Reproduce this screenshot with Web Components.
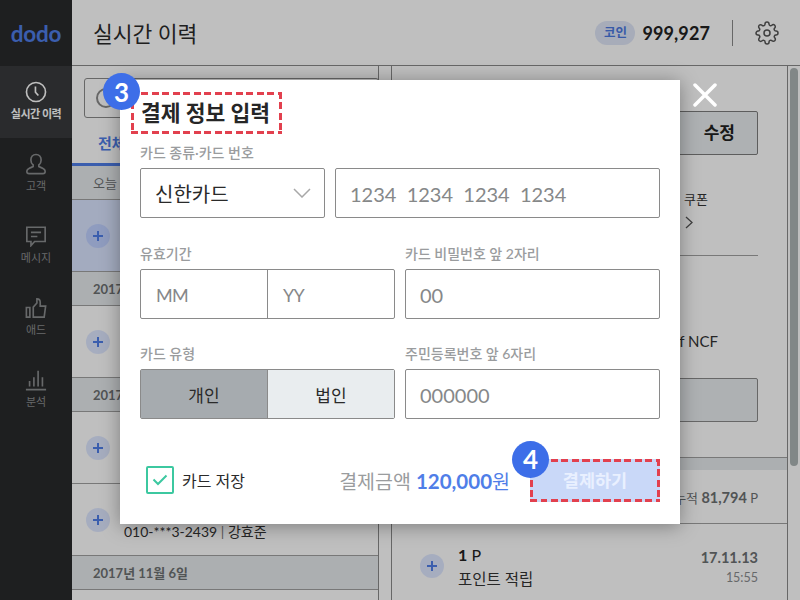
<!DOCTYPE html>
<html lang="ko">
<head>
<meta charset="utf-8">
<title>dodo</title>
<style>
  html, body { margin: 0; height: 100%; overflow: hidden; }
  body { font-family: Lato, "Noto Sans CJK KR", sans-serif; color: #2a2a2a; }
  dodo-app { width: 800px; height: 600px; }
</style>
</head>
<body>

<dodo-app>
  <nav-rail slot="rail">
    <nav-item label="실시간 이력" icon="clock" active></nav-item>
    <nav-item label="고객" icon="person"></nav-item>
    <nav-item label="메시지" icon="message"></nav-item>
    <nav-item label="애드" icon="thumb"></nav-item>
    <nav-item label="분석" icon="chart"></nav-item>
  </nav-rail>
  <top-bar slot="top" heading="실시간 이력" coin="999,927"></top-bar>
  <history-list slot="list">
    <date-row light>오늘</date-row>
    <history-row active></history-row>
    <date-row>2017</date-row>
    <history-row></history-row>
    <date-row>2017</date-row>
    <history-row></history-row>
    <history-row>010-***3-2439 <i>|</i> 강효준</history-row>
    <date-row>2017년 11월 6일</date-row>
  </history-list>
  <detail-panel slot="detail"></detail-panel>
  <pay-modal slot="modal"></pay-modal>
</dodo-app>

<script>
const FONT = `Lato, "Noto Sans CJK KR", sans-serif`

// red dashed frame drawn as four gradients, css "dashed" is too short here
const RED = "#e2404e"
const dashH = `repeating-linear-gradient(90deg, ${RED} 0 7px, transparent 7px 10.5px)`
const dashV = `repeating-linear-gradient(180deg, ${RED} 0 7px, transparent 7px 10.5px)`
const FRAME = `${dashH} left top / 100% 3px no-repeat, ${dashH} left bottom / 100% 3px no-repeat, ${dashV} left top / 3px 100% no-repeat, ${dashV} right top / 3px 100% no-repeat`

const ICONS = {
    clock: `<circle cx="12" cy="12" r="10.4"/><path d="M11.4 6v6.2l3.2 3.6"/>`,
    person: `<path d="M12 1.6c-3.5 0-5.6 2.6-5.6 6 0 2.400 1 4.300 2.500 5.500v1.700c-2.300.9-6.900 2.200-6.900 5.300 0 1.500 1 2.400 2.400 2.400h15.200c1.400 0 2.400-.9 2.400-2.400 0-3.100-4.600-4.400-6.900-5.300v-1.700c1.500-1.200 2.500-3.100 2.500-5.500 0-3.400-2.100-6-5.600-6z"/>`,
    message: `<path d="M2 2.500h20v15.500H10.500l-4 4.500v-4.500H2z"/><path d="M6.500 8h11M6.500 12.500h7"/>`,
    thumb: `<path d="M1.500 11.500h3.800v10.500H1.500zM9 22V11l4-4.500V2c2.400 0 3.600 1.600 3.600 3.800V10h5.900l-1.600 12z"/>`,
    chart: `<path d="M1 22.500h22M5 19v-6M9.700 19V9M14.300 19V2M19 19V9"/>`
}

class DodoApp extends HTMLElement {
    connectedCallback() {
        this.attachShadow({ mode: "open" })
        this.shadowRoot.innerHTML = `
      <style>
        :host { display: flex; position: relative; background: #fff; overflow: hidden; }
        .main { flex: 1; display: flex; flex-direction: column; min-width: 0; }
        .body { flex: 1; display: flex; min-height: 0; }
        .gutter { width: 14px; border-left: 1px solid #8a8a8a; border-right: 1px solid #8a8a8a; box-sizing: border-box; background: #fff; }
        .track { width: 13px; border-left: 1px solid #8a8a8a; box-sizing: border-box; padding: 2px 2px 0 2px; }
        .thumb { height: 398px; background: #adb5b5; border-radius: 4px; }
        .veil { position: absolute; inset: 0; background: rgba(0,0,0,.25); display: flex; justify-content: center; align-items: flex-start; padding-top: 80px; box-sizing: border-box; }
      </style>
      <slot name="rail"></slot>
      <div class="main">
        <slot name="top"></slot>
        <div class="body">
          <slot name="list"></slot>
          <div class="gutter"></div>
          <slot name="detail"></slot>
          <div class="track"><div class="thumb"></div></div>
        </div>
      </div>
      <div class="veil"><slot name="modal"></slot></div>
    `
    }
}

class NavRail extends HTMLElement {
    connectedCallback() {
        this.attachShadow({ mode: "open" })
        this.shadowRoot.innerHTML = `
      <style>
        :host { display: flex; flex-direction: column; width: 72px; background: #292a2b; flex: none; }
        .logo { height: 66px; display: flex; align-items: center; justify-content: center; font: 700 22.500px ${FONT}; color: #4f7ee8; letter-spacing: -.2px; }
      </style>
      <div class="logo">dodo</div>
      <slot></slot>
    `
    }
}

class NavItem extends HTMLElement {
    connectedCallback() {
        const on = this.hasAttribute("active")
        this.attachShadow({ mode: "open" })
        this.shadowRoot.innerHTML = `
      <style>
        :host { display: flex; flex-direction: column; align-items: center; height: 72px; padding-top: 15px; box-sizing: border-box; color: ${on ? "#fff" : "#8a8c8e"}; background: ${on ? "#383a3c" : "transparent"}; }
        svg { width: 22px; height: 22px; fill: none; stroke: currentColor; stroke-width: 1.800; }
        span { font: ${on ? 700 : 400} 11px/14px ${FONT}; margin-top: 4px; white-space: nowrap; letter-spacing: ${on ? "-.5px" : "0"}; }
      </style>
      <svg viewBox="0 0 24 24">${ICONS[this.getAttribute("icon")]}</svg>
      <span>${this.getAttribute("label")}</span>
    `
    }
}

class TopBar extends HTMLElement {
    connectedCallback() {
        this.attachShadow({ mode: "open" })
        this.shadowRoot.innerHTML = `
      <style>
        :host { display: flex; align-items: center; height: 66px; box-sizing: border-box; border-bottom: 1px solid #8a8a8a; padding: 0 21px 0 21px; }
        h1 { margin: 0; font: 400 21.500px ${FONT}; color: #2a2a2a; flex: 1; }
        .pill { font: 700 12.500px/24px ${FONT}; width: 40px; text-align: center; border-radius: 12px; background: #dfe6f7; color: #4a78e0; }
        .coin { font: 700 18px ${FONT}; letter-spacing: .1px; margin-left: 7px; color: #222; }
        .sep { width: 1px; height: 26px; background: #8a8a8a; margin: 0 22px; }
        svg { width: 24px; height: 24px; fill: none; stroke: #555; stroke-width: 1.500; }
      </style>
      <h1>${this.getAttribute("heading")}</h1>
      <span class="pill">코인</span>
      <span class="coin">${this.getAttribute("coin")}</span>
      <span class="sep"></span>
      <svg viewBox="0 0 24 24"><circle cx="12" cy="12" r="3"/><path d="M19.400 15a1.650 1.650 0 0 0 .33 1.820l.06.06a2 2 0 0 1 0 2.830 2 2 0 0 1-2.830 0l-.06-.06a1.650 1.650 0 0 0-1.820-.33 1.650 1.650 0 0 0-1 1.510V21a2 2 0 0 1-2 2 2 2 0 0 1-2-2v-.09A1.650 1.650 0 0 0 9 19.400a1.650 1.650 0 0 0-1.820.33l-.06.06a2 2 0 0 1-2.830 0 2 2 0 0 1 0-2.830l.06-.06a1.650 1.650 0 0 0 .33-1.820 1.650 1.650 0 0 0-1.510-1H3a2 2 0 0 1-2-2 2 2 0 0 1 2-2h.09A1.650 1.650 0 0 0 4.600 9a1.650 1.650 0 0 0-.33-1.820l-.06-.06a2 2 0 0 1 0-2.830 2 2 0 0 1 2.830 0l.06.06a1.650 1.650 0 0 0 1.820.33H9a1.650 1.650 0 0 0 1-1.510V3a2 2 0 0 1 2-2 2 2 0 0 1 2 2v.09a1.650 1.650 0 0 0 1 1.510 1.650 1.650 0 0 0 1.820-.33l.06-.06a2 2 0 0 1 2.830 0 2 2 0 0 1 0 2.830l-.06.06a1.650 1.650 0 0 0-.33 1.820V9a1.650 1.650 0 0 0 1.510 1H21a2 2 0 0 1 2 2 2 2 0 0 1-2 2h-.09a1.650 1.650 0 0 0-1.510 1z"/></svg>
    `
    }
}

class HistoryList extends HTMLElement {
    connectedCallback() {
        this.attachShadow({ mode: "open" })
        this.shadowRoot.innerHTML = `
      <style>
        :host { display: flex; flex-direction: column; width: 306px; flex: none; }
        .search { height: 40px; margin: 12px -1px 0 12px; border: 1px solid #8a8a8a; border-radius: 3px; box-sizing: border-box; padding: 9px 0 0 11px; }
        .search i { display: block; width: 16px; height: 16px; border: 2px solid #8a8a8a; border-radius: 50%; }
        .tabs { height: 48px; display: flex; border-bottom: 3px solid #4f7ee8; box-sizing: border-box; }
        .tabs b { font: 700 15px/50px ${FONT}; color: #4f7ee8; padding-left: 26px; }
      </style>
      <div class="search"><i></i></div>
      <div class="tabs"><b>전체</b></div>
      <slot></slot>
    `
    }
}

class DateRow extends HTMLElement {
    connectedCallback() {
        const weight = this.hasAttribute("light") ? 400 : 700
        this.attachShadow({ mode: "open" })
        this.shadowRoot.innerHTML = `
      <style>
        :host { display: flex; align-items: center; flex: none; height: 34px; box-sizing: border-box; padding-left: 21px; background: #e6eaec; border-bottom: 1px solid #a0a0a0; font: ${weight} 13px ${FONT}; color: #6d7072; }
      </style>
      <slot></slot>
    `
    }
}

class PlusDot extends HTMLElement {
    connectedCallback() {
        this.attachShadow({ mode: "open" })
        this.shadowRoot.innerHTML = `
      <style>
        :host { display: flex; align-items: center; justify-content: center; width: 24px; height: 24px; border-radius: 50%; background: rgba(60,110,255,.17); flex: none; }
        svg { width: 12px; height: 12px; stroke: #4f7ee8; stroke-width: 2; }
      </style>
      <svg viewBox="0 0 12 12"><path d="M6 1v10M1 6h10"/></svg>
    `
    }
}

class HistoryRow extends HTMLElement {
    connectedCallback() {
        const on = this.hasAttribute("active")
        this.attachShadow({ mode: "open" })
        this.shadowRoot.innerHTML = `
      <style>
        :host { display: flex; flex: none; height: 72px; box-sizing: border-box; padding: 24px 0 0 14px; gap: 14px; background: ${on ? "#dae4ff" : "#fff"}; border-bottom: 1px solid #a0a0a0; }
        .txt { font: 400 14px/18px ${FONT}; color: #333; padding-top: 15px; white-space: nowrap; }
        ::slotted(i) { font-style: normal; color: #777; }
      </style>
      <plus-dot></plus-dot>
      <div class="txt"><slot></slot></div>
    `
    }
}

class DetailPanel extends HTMLElement {
    connectedCallback() {
        this.attachShadow({ mode: "open" })
        this.shadowRoot.innerHTML = `
      <style>
        :host { display: flex; flex-direction: column; width: 395px; flex: none; font-family: ${FONT}; }
        .pad { padding: 0 29px 0 8px; }
        .btn { height: 44px; box-sizing: border-box; border: 1px solid #7d7d7d; border-radius: 2px; background: #e9edef; font: 700 17px/42px ${FONT}; color: #222; text-align: right; padding-right: 22px; margin-top: 45px; }
        .coupon { margin: 35px 0 0 284px; height: 65px; font-size: 13px; line-height: 18px; color: #333; }
        .coupon svg { display: block; width: 8px; height: 13px; margin: 8px 0 0 1px; fill: none; stroke: #555; stroke-width: 1.300; }
        .rule { height: 1px; background: #a0a0a0; }
        .ncf { margin-top: 75px; font: 400 15px/20px ${FONT}; color: #333; text-align: right; padding-right: 40px; }
        .wide { height: 44px; box-sizing: border-box; border: 1px solid #8a8a8a; border-radius: 2px; background: #e9edef; margin-top: 27px; }
        .band { height: 13px; margin-top: 35px; background: #e6eaec; border-top: 1px solid #a0a0a0; box-sizing: border-box; }
        .sum { height: 54px; border-bottom: 1px solid #a0a0a0; box-sizing: border-box; padding: 20px 29px 0 0; text-align: right; font-size: 13px; line-height: 16px; color: #6d7072; }
        .sum b { font-size: 14.500px; }
        .item { display: flex; padding: 30px 29px 0 28px; }
        .info { flex: 1; padding-left: 14px; margin-top: -9px; }
        .pts { font: 400 16px/20px ${FONT}; color: #222; }
        .pts b { font-weight: 700; }
        .what { font: 400 15.500px/22px ${FONT}; color: #333; margin-top: 3px; }
        .when { text-align: right; margin-top: -6px; }
        .when b { display: block; font: 700 14.500px/20px ${FONT}; color: #6d7072; }
        .when span { display: block; font: 400 12.500px/20px ${FONT}; color: #8a8c8e; }
      </style>
      <div class="pad">
        <div class="btn">수정</div>
        <div class="coupon">쿠폰
          <svg viewBox="0 0 8 13"><path d="M1 1l6 5.500-6 5.500"/></svg>
        </div>
        <div class="rule"></div>
        <div class="ncf">Proof of NCF</div>
        <div class="wide"></div>
      </div>
      <div class="band"></div>
      <div class="sum">누적 <b>81,794</b> P</div>
      <div class="item">
        <plus-dot></plus-dot>
        <div class="info">
          <div class="pts"><b>1</b> P</div>
          <div class="what">포인트 적립</div>
        </div>
        <div class="when"><b>17.11.13</b><span>15:55</span></div>
      </div>
    `
    }
}

class StepBadge extends HTMLElement {
    connectedCallback() {
        this.attachShadow({ mode: "open" })
        this.shadowRoot.innerHTML = `
      <style>
        :host { position: absolute; width: 37px; height: 37px; border-radius: 50%; background: #3d6ee8; color: #fff; display: flex; align-items: center; justify-content: center; font: 700 26px ${FONT}; }
      </style>
      <slot></slot>
    `
    }
}

class FormField extends HTMLElement {
    connectedCallback() {
        this.attachShadow({ mode: "open" })
        this.shadowRoot.innerHTML = `
      <style>
        :host { display: block; }
        label { display: block; font: 500 14px/18px ${FONT}; color: #9a9c9e; margin-bottom: 6px; white-space: nowrap; }
      </style>
      <label>${this.getAttribute("label")}</label>
      <slot></slot>
    `
    }
}

class TextBox extends HTMLElement {
    connectedCallback() {
        this.attachShadow({ mode: "open" })
        this.shadowRoot.innerHTML = `
      <style>
        :host { display: flex; align-items: center; height: 50px; box-sizing: border-box; border: 1px solid #8a8a8a; border-radius: 2px; padding: 2px 0 0 14px; font: 400 20px ${FONT}; color: #868889; background: #fff; }
        slot { white-space: pre; }
      </style>
      <slot></slot>
    `
    }
}

class PayModal extends HTMLElement {
    connectedCallback() {
        this.attachShadow({ mode: "open" })
        this.shadowRoot.innerHTML = `
      <style>
        :host { display: block; position: relative; width: 560px; height: 444px; box-sizing: border-box; padding: 12px 20px 0; background: #fff; box-shadow: 0 2px 18px rgba(0,0,0,.35); font-family: ${FONT}; }
        .title { position: relative; box-sizing: border-box; width: 151px; height: 42px; margin: 0 0 10px -9px; padding-left: 10px; background: ${FRAME}; font: 700 21.500px/42px ${FONT}; color: #262626; white-space: nowrap; }
        .title step-badge { left: -28px; top: -19px; }
        .close { position: absolute; left: 573px; top: 3px; width: 24px; height: 24px; stroke: #fff; stroke-width: 3.500; stroke-linecap: round; }
        .grid { display: grid; grid-template-columns: 255px 255px; gap: 26px 10px; margin-top: 27px; }
        .row1 { display: grid; grid-template-columns: 185px 325px; gap: 0 10px; }
        .row1 form-field { grid-column: 1 / 3; }
        .pick { color: #2a2a2a; font-size: 20px; justify-content: space-between; padding: 0 13px 0 14px; }
        .pick svg { width: 18px; height: 10px; fill: none; stroke: #a8a8a8; stroke-width: 1.500; }
        .split { display: flex; height: 50px; box-sizing: border-box; border: 1px solid #8a8a8a; border-radius: 2px; }
        .split > div { flex: 1; display: flex; align-items: center; box-sizing: border-box; }
        .split > div + div { border-left: 1px solid #8a8a8a; }
        .date > div { padding: 2px 0 0 15px; font: 400 18px ${FONT}; letter-spacing: -.8px; color: #868889; }
        .kind > div { justify-content: center; font: 400 17px ${FONT}; color: #2a2a2a; }
        .kind .on { background: #a6abaf; }
        .kind .off { background: #e9edef; }
        .foot { display: flex; align-items: center; margin-top: 40px; height: 42px; padding-left: 6px; }
        .check { width: 28px; height: 28px; box-sizing: border-box; border: 2px solid #3cc8a0; border-radius: 2px; display: flex; align-items: center; justify-content: center; }
        .check svg { width: 16px; height: 12px; fill: none; stroke: #3cc8a0; stroke-width: 2; }
        .save { font: 400 16px ${FONT}; margin-left: 8px; color: #2a2a2a; }
        .amount { margin-left: auto; font: 400 19.500px ${FONT}; color: #9a9c9e; white-space: nowrap; }
        .amount b { font: 700 20.500px ${FONT}; color: #4f7ee8; }
        .amount span { color: #4f7ee8; }
        .pay { position: relative; width: 130px; height: 43px; flex: none; margin-left: 20px; background: ${FRAME}, #c9d8f8; color: #e9f0ff; font: 700 17.500px/43px ${FONT}; text-align: center; }
        .pay step-badge { left: -18px; top: -18px; }
      </style>
      <div class="title">결제 정보 입력<step-badge>3</step-badge></div>
      <svg class="close" viewBox="0 0 24 24"><path d="M2 2l20 20M22 2L2 22"/></svg>
      <div class="row1">
        <form-field label="카드 종류·카드 번호"></form-field>
        <text-box class="pick">신한카드<svg viewBox="0 0 18 10"><path d="M1 1l8 8 8-8"/></svg></text-box>
        <text-box>1234  1234  1234  1234</text-box>
      </div>
      <div class="grid">
        <form-field label="유효기간"><div class="split date"><div>MM</div><div>YY</div></div></form-field>
        <form-field label="카드 비밀번호 앞 2자리"><text-box>00</text-box></form-field>
        <form-field label="카드 유형"><div class="split kind"><div class="on">개인</div><div class="off">법인</div></div></form-field>
        <form-field label="주민등록번호 앞 6자리"><text-box>000000</text-box></form-field>
      </div>
      <div class="foot">
        <div class="check"><svg viewBox="0 0 16 12"><path d="M1.500 5.500l4.500 4.500 8.500-8.500"/></svg></div>
        <span class="save">카드 저장</span>
        <span class="amount">결제금액 <b>120,000</b><span>원</span></span>
        <div class="pay">결제하기<step-badge>4</step-badge></div>
      </div>
    `
    }
}

customElements.define("dodo-app", DodoApp)
customElements.define("nav-rail", NavRail)
customElements.define("nav-item", NavItem)
customElements.define("top-bar", TopBar)
customElements.define("history-list", HistoryList)
customElements.define("date-row", DateRow)
customElements.define("plus-dot", PlusDot)
customElements.define("history-row", HistoryRow)
customElements.define("detail-panel", DetailPanel)
customElements.define("step-badge", StepBadge)
customElements.define("form-field", FormField)
customElements.define("text-box", TextBox)
customElements.define("pay-modal", PayModal)
</script>
</body>
</html>
